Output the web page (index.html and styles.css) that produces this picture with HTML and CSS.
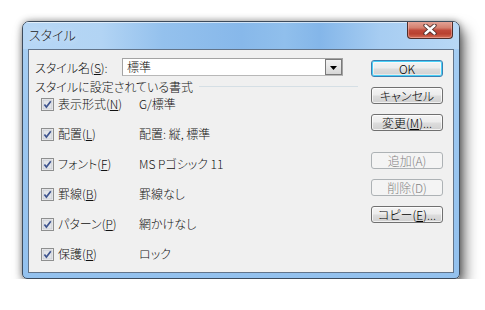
FILE: index.html
```html
<!DOCTYPE html>
<html lang="ja">
<head>
<meta charset="utf-8">
<title>スタイル</title>
<link rel="stylesheet" href="styles.css">
</head>
<body>
<div class="window">
  <div class="titlebar">
    <span class="title">スタイル</span>
    <div class="close">
      <svg width="14" height="11" viewBox="0 0 14 11">
        <path d="M2.5 1.5 L11.5 9.5 M11.5 1.5 L2.5 9.5" stroke="#4a2a28" stroke-width="4.2" stroke-linecap="round"/>
        <path d="M2.5 1.5 L11.5 9.5 M11.5 1.5 L2.5 9.5" stroke="#ffffff" stroke-width="2.4" stroke-linecap="round"/>
      </svg>
    </div>
  </div>
  <div class="client">
    <div class="main">
      <div class="name-row">
        <span class="name-label">スタイル名(<u>S</u>):</span>
        <div class="combo">
          <span class="combo-text">標準</span>
          <span class="combo-btn">
            <svg width="7" height="4" viewBox="0 0 7 4"><path d="M0 0 H7 L3.5 4 Z" fill="#000"/></svg>
          </span>
        </div>
      </div>
      <div class="group-title"><span>スタイルに設定されている書式</span><span class="group-line"></span></div>
      <div class="rows">
        <div class="row"><span class="check"><svg width="13" height="13" viewBox="0 0 13 13"><rect x="0.5" y="0.5" width="12" height="12" fill="#f4f4f4" stroke="#8e8f8f"/><rect x="2" y="2" width="9" height="9" fill="#e2e4e8" stroke="#b8bdc6" stroke-width="0.6"/><path d="M3.4 6.4 L5.4 9 L9.8 3.2" fill="none" stroke="#3f5590" stroke-width="1.7"/></svg></span><span class="row-label">表示形式(<u>N</u>)</span><span class="row-value">G/標準</span></div>
        <div class="row"><span class="check"><svg width="13" height="13" viewBox="0 0 13 13"><rect x="0.5" y="0.5" width="12" height="12" fill="#f4f4f4" stroke="#8e8f8f"/><rect x="2" y="2" width="9" height="9" fill="#e2e4e8" stroke="#b8bdc6" stroke-width="0.6"/><path d="M3.4 6.4 L5.4 9 L9.8 3.2" fill="none" stroke="#3f5590" stroke-width="1.7"/></svg></span><span class="row-label">配置(<u>L</u>)</span><span class="row-value">配置: 縦, 標準</span></div>
        <div class="row"><span class="check"><svg width="13" height="13" viewBox="0 0 13 13"><rect x="0.5" y="0.5" width="12" height="12" fill="#f4f4f4" stroke="#8e8f8f"/><rect x="2" y="2" width="9" height="9" fill="#e2e4e8" stroke="#b8bdc6" stroke-width="0.6"/><path d="M3.4 6.4 L5.4 9 L9.8 3.2" fill="none" stroke="#3f5590" stroke-width="1.7"/></svg></span><span class="row-label">フォント(<u>F</u>)</span><span class="row-value">MS Pゴシック 11</span></div>
        <div class="row"><span class="check"><svg width="13" height="13" viewBox="0 0 13 13"><rect x="0.5" y="0.5" width="12" height="12" fill="#f4f4f4" stroke="#8e8f8f"/><rect x="2" y="2" width="9" height="9" fill="#e2e4e8" stroke="#b8bdc6" stroke-width="0.6"/><path d="M3.4 6.4 L5.4 9 L9.8 3.2" fill="none" stroke="#3f5590" stroke-width="1.7"/></svg></span><span class="row-label">罫線(<u>B</u>)</span><span class="row-value">罫線なし</span></div>
        <div class="row"><span class="check"><svg width="13" height="13" viewBox="0 0 13 13"><rect x="0.5" y="0.5" width="12" height="12" fill="#f4f4f4" stroke="#8e8f8f"/><rect x="2" y="2" width="9" height="9" fill="#e2e4e8" stroke="#b8bdc6" stroke-width="0.6"/><path d="M3.4 6.4 L5.4 9 L9.8 3.2" fill="none" stroke="#3f5590" stroke-width="1.7"/></svg></span><span class="row-label">パターン(<u>P</u>)</span><span class="row-value">網かけなし</span></div>
        <div class="row"><span class="check"><svg width="13" height="13" viewBox="0 0 13 13"><rect x="0.5" y="0.5" width="12" height="12" fill="#f4f4f4" stroke="#8e8f8f"/><rect x="2" y="2" width="9" height="9" fill="#e2e4e8" stroke="#b8bdc6" stroke-width="0.6"/><path d="M3.4 6.4 L5.4 9 L9.8 3.2" fill="none" stroke="#3f5590" stroke-width="1.7"/></svg></span><span class="row-label">保護(<u>R</u>)</span><span class="row-value">ロック</span></div>
      </div>
    </div>
    <div class="buttons">
      <div class="btn btn-default">OK</div>
      <div class="btn">キャンセル</div>
      <div class="btn">変更(<u>M</u>)...</div>
      <div class="btn btn-disabled btn-spaced">追加(A)</div>
      <div class="btn btn-disabled">削除(D)</div>
      <div class="btn">コピー(<u>E</u>)...</div>
    </div>
  </div>
</div>
</body>
</html>
```

FILE: styles.css
```css
html, body {
  margin: 0;
  padding: 0;
  background: #ffffff;
}

body {
  font-family: "Noto Sans CJK JP", "Liberation Sans", sans-serif;
  font-size: 12px;
  font-weight: 300;
  color: #111;
  font-feature-settings: "palt";
}

.window {
  box-sizing: border-box;
  width: 438px;
  height: 258px;
  margin: 21px 0 0 22px;
  border: 1px solid #3d4b5c;
  border-radius: 7px 7px 5px 5px;
  background: linear-gradient(180deg, #a9d0f4 0%, #9cc7f0 40%, #93c1ee 100%);
  box-shadow: 5px 8px 14px rgba(0, 0, 0, 0.55), 0 0 7px rgba(0, 0, 0, 0.4);
  display: flex;
  flex-direction: column;
  overflow: hidden;
}

.titlebar {
  height: 27px;
  display: flex;
  align-items: flex-start;
  justify-content: space-between;
  background: linear-gradient(90deg, #b7d7f5 0%, #b2d4f4 18%, #94c1ed 32%, #87b8ea 50%, #90bfec 60%, #84b6e9 68%, #a7cdf2 82%, #b8d8f5 100%);
  box-shadow: inset 0 1px 0 rgba(255, 255, 255, 0.6);
}

.title {
  padding: 6px 0 0 6px;
  font-size: 13px;
  line-height: 14px;
  color: #1b1b1b;
  text-shadow: 0 0 6px rgba(255, 255, 255, 0.9);
}

.close {
  width: 46px;
  height: 18px;
  margin: -1px 6px 0 0;
  box-sizing: border-box;
  border: 1px solid #4f2e2b;
  border-top: none;
  border-radius: 0 0 4px 4px;
  background: linear-gradient(180deg, #e6a89c 0%, #d4806f 40%, #c0493a 55%, #b8402f 75%, #d46e56 100%);
  box-shadow: inset 0 0 0 1px rgba(255, 200, 190, 0.45);
  display: flex;
  align-items: center;
  justify-content: center;
}

.client {
  box-sizing: border-box;
  width: 426px;
  height: 224px;
  margin: 0 0 0 5px;
  border: 1px solid #62748a;
  background: #f0f0f0;
  display: flex;
  gap: 13px;
}

.main {
  box-sizing: border-box;
  width: 329px;
  padding-left: 6px;
  display: flex;
  flex-direction: column;
}

.name-row {
  margin-top: 8px;
  height: 18px;
  display: flex;
  align-items: center;
}

.name-label {
  width: 87px;
  flex: none;
}

.combo {
  box-sizing: border-box;
  width: 221px;
  height: 18px;
  border: 1px solid #a3a3a3;
  border-bottom-color: #b8b8b8;
  background: #fff;
  display: flex;
  align-items: center;
  justify-content: space-between;
}

.combo-text {
  padding-left: 4px;
  line-height: 14px;
}

.combo-btn {
  box-sizing: border-box;
  width: 17px;
  height: 16px;
  border: 1px solid #7a7a7a;
  background: linear-gradient(180deg, #f2f2f2 0%, #e6e6e6 50%, #d6d6d6 100%);
  display: flex;
  align-items: center;
  justify-content: center;
  padding-top: 1px;
}

.group-title {
  margin-top: 4px;
  height: 13px;
  display: flex;
  align-items: center;
  gap: 6px;
  line-height: 13px;
}

.group-line {
  flex: 1;
  height: 0;
  border-top: 1px solid #d5dfe5;
}

.rows {
  margin-top: 4px;
  padding-left: 6px;
  display: flex;
  flex-direction: column;
  gap: 16px;
}

.row {
  height: 14px;
  display: flex;
  align-items: center;
  line-height: 14px;
}

.check {
  width: 13px;
  height: 13px;
  margin-right: 4px;
  display: flex;
}

.row-label {
  width: 81px;
  flex: none;
}

.buttons {
  width: 72px;
  padding-top: 10px;
  display: flex;
  flex-direction: column;
  gap: 10px;
}

.btn {
  box-sizing: border-box;
  height: 17px;
  border: 1px solid #707070;
  border-radius: 3px;
  background: linear-gradient(180deg, #f4f4f4 0%, #ececec 48%, #dddddd 52%, #d0d0d0 100%);
  box-shadow: inset 0 0 0 1px rgba(255, 255, 255, 0.7);
  display: flex;
  align-items: center;
  justify-content: center;
  line-height: 14px;
  color: #000;
}

.btn-default {
  border-color: #3c7fb1;
  box-shadow: inset 0 0 0 1px #48d0f8, inset 0 0 0 2px rgba(255, 255, 255, 0.5);
}

.btn-disabled {
  border-color: #adb2b5;
  background: #f4f4f4;
  box-shadow: none;
  color: #838383;
}

.btn-spaced {
  margin-top: 11px;
}

u {
  text-decoration: underline;
  text-underline-offset: 1px;
}
```
